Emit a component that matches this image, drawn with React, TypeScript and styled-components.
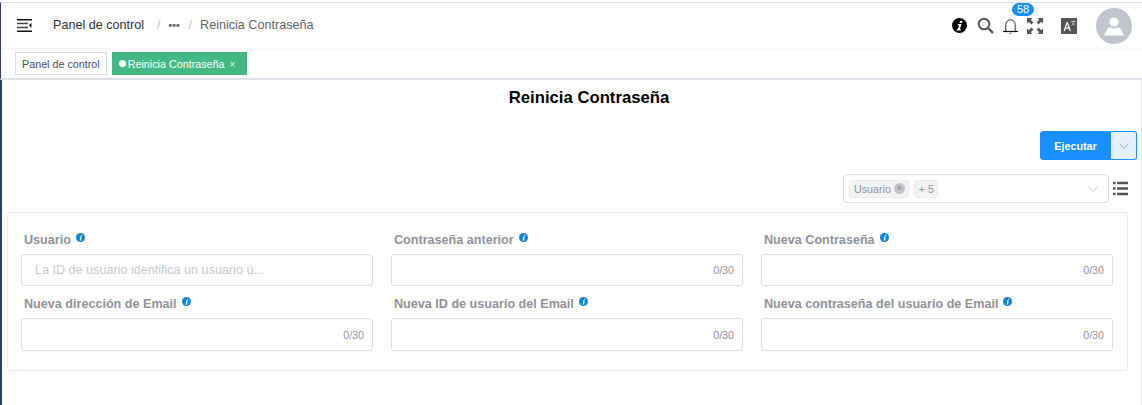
import React from "react";
import styled, { createGlobalStyle } from "styled-components";
import { ChevronDown } from "lucide-react";

const Global = createGlobalStyle`
  html, body { margin: 0; padding: 0; background: #fff; }
  body { font-family: "Liberation Sans", Arial, sans-serif; }
  * { box-sizing: border-box; }
`;

const Page = styled.div`
  width: 1142px;
  height: 405px;
  overflow: hidden;
  background: #fff;
  padding-top: 2px;
`;

const Header = styled.header`
  height: 46px;
  display: flex;
  align-items: center;
  padding: 0 10px 0 16px;
  border-top: 1px solid #dcdee3;
  border-left: 1px solid #2c3e66;
  box-shadow: 0 1px 3px rgba(0, 21, 41, 0.06);
`;

const Crumbs = styled.nav`
  display: flex;
  align-items: center;
  margin: -2px 0 0 21px;
  font-size: 12.6px;
  color: #303133;
`;

const Home = styled.span`
  margin-right: 4px;
`;

const Sep = styled.span`
  color: #c0c4cc;
  margin: 0 8px 0 9px;
`;

const Dots = styled.span`
  color: #606266;
  font-weight: bold;
  font-size: 10.5px;
`;

const Current = styled.span`
  color: #606266;
`;

const Tools = styled.div`
  margin-left: auto;
  display: flex;
  align-items: center;
`;

const BellWrap = styled.div`
  position: relative;
  width: 15px;
  height: 16px;
  margin-left: 9px;
`;

const Badge = styled.span`
  position: absolute;
  top: -15px;
  left: 9px;
  width: 22px;
  height: 13px;
  border-radius: 7px;
  background: #1890ff;
  color: #fff;
  font-size: 11px;
  line-height: 13px;
  text-align: center;
`;

const Avatar = styled.div`
  width: 36px;
  height: 36px;
  border-radius: 50%;
  background: #c0c4cc;
  margin-left: 19px;
  display: flex;
  align-items: center;
  justify-content: center;
`;

const TagsBar = styled.div`
  height: 32px;
  display: flex;
  align-items: flex-start;
  gap: 5px;
  padding: 4px 0 0 14px;
  border-left: 1px solid #2c3e66;
  border-bottom: 2px solid #dfe2ea;
`;

const Tag = styled.div<{ $active?: boolean }>`
  height: 23px;
  display: flex;
  align-items: center;
  padding: 0 ${(p) => (p.$active ? 11 : 6)}px 0 6px;
  font-size: 10.75px;
  color: ${(p) => (p.$active ? "#fff" : "#495060")};
  background: ${(p) => (p.$active ? "#42b983" : "#fff")};
  border: 1px solid ${(p) => (p.$active ? "#42b983" : "#d8dce5")};
`;

const TagDot = styled.span`
  width: 7px;
  height: 7px;
  border-radius: 50%;
  background: #fff;
  margin-right: 2px;
`;

const TagClose = styled.span`
  font-size: 10px;
  margin: 2px 0 0 5px;
  color: #e8f5ef;
`;

const Main = styled.main`
  height: 325px;
  padding: 0 4px 0 5px;
  border-left: 2px solid #2c3e66;
  border-right: 1px solid #e6e8ee;
`;

const Title = styled.h1`
  margin: 0;
  padding: 8px 0 0 34px;
  height: 51px;
  font-size: 16.7px;
  line-height: 20px;
  font-weight: bold;
  color: #000;
  text-align: center;
`;

const ActionRow = styled.div`
  display: flex;
  justify-content: flex-end;
`;

const RunButton = styled.button`
  width: 71px;
  height: 29px;
  border: 1px solid #1890ff;
  border-radius: 3px 0 0 3px;
  background: #1890ff;
  color: #fff;
  font: bold 10.8px "Liberation Sans", Arial, sans-serif;
`;

const RunArrow = styled.button`
  width: 26px;
  height: 29px;
  border: 1px solid #1890ff;
  border-left: none;
  border-radius: 0 3px 3px 0;
  background: #e6f0fd;
  color: #6f8fd8;
  display: flex;
  align-items: center;
  justify-content: center;
  padding: 0;
`;

const FilterRow = styled.div`
  display: flex;
  justify-content: flex-end;
  align-items: center;
  margin-top: 14px;
  gap: 4px;
  padding-right: 9px;
`;

const Select = styled.div`
  width: 266px;
  height: 29px;
  border: 1px solid #dcdfe6;
  border-radius: 3px;
  display: flex;
  align-items: center;
  gap: 5px;
  padding: 0 5px;
  color: #c0c4cc;
`;

const Chip = styled.span`
  height: 18px;
  display: flex;
  align-items: center;
  gap: 3px;
  padding: 0 3px 0 4px;
  background: #f4f4f5;
  border: 1px solid #ececee;
  border-radius: 3px;
  font-size: 10.7px;
  color: #909399;
`;

const ChipClose = styled.span`
  width: 11px;
  height: 11px;
  border-radius: 50%;
  background: #c0c4cc;
  color: #7d8087;
  font-size: 9px;
  line-height: 11px;
  text-align: center;
`;

const Spacer = styled.span`
  flex: 1;
`;

const Card = styled.section`
  margin-top: 9px;
  width: 1121px;
  height: 159px;
  border: 1px solid #e9ebf2;
  border-radius: 3px;
  padding: 9px 13px 0;
  display: grid;
  grid-template-columns: repeat(3, 352px);
  column-gap: 18px;
  align-content: start;
`;

const Field = styled.div``;

const Label = styled.label`
  display: flex;
  align-items: flex-start;
  height: 32px;
  padding: 11px 0 0 3px;
  font-size: 12.6px;
  line-height: 15px;
  font-weight: bold;
  color: #8f9299;
`;

const InputBox = styled.div<{ $tall?: boolean }>`
  height: ${(p) => (p.$tall ? 33 : 32)}px;
  border: 1px solid #dcdfe6;
  border-radius: 3px;
  display: flex;
  align-items: center;
  padding: 0 8px 0 13px;
  font-size: 12.6px;
  color: #c6c9cf;
`;

const Count = styled.span`
  margin-left: auto;
  font-size: 10.7px;
  color: #909399;
`;

const InfoDot = styled.svg`
  margin: 0 0 0 5px;
  flex: none;
`;

const SideIcon = styled.svg`
  flex: none;
`;

const ToolIcon = styled.svg<{ $gap?: number }>`
  flex: none;
  margin-left: ${(p) => p.$gap ?? 0}px;
`;

const InfoIcon = () => (
  <InfoDot width="9" height="9" viewBox="0 0 18 18">
    <circle cx="9" cy="9" r="9" fill="#0a84d6" />
    <path d="M10.5 3.5h2.2l-.5 2.2H10zM8 7.2h3.6L10 13.2h1.2l-.4 1.6H7l1.6-6H7.6z" fill="#fff" />
  </InfoDot>
);

const fields = [
  { label: "Usuario", placeholder: "La ID de usuario identifica un usuario ú..." },
  { label: "Contraseña anterior" },
  { label: "Nueva Contraseña" },
  { label: "Nueva dirección de Email", tall: true },
  { label: "Nueva ID de usuario del Email", tall: true },
  { label: "Nueva contraseña del usuario de Email", tall: true },
];

export default function App() {
  return (
    <Page>
      <Global />
      <Header>
        <SideIcon width="15" height="13" viewBox="0 0 15 13">
          <path d="M0 .8h15M0 12.2h15" stroke="#111" strokeWidth="1.5" />
          <path d="M0 4.6h11M0 8.4h11" stroke="#444" strokeWidth="1.5" />
          <path d="M14.5 3.8v5l-2.6-2.5z" fill="#111" />
        </SideIcon>
        <Crumbs>
          <Home>Panel de control</Home>
          <Sep>/</Sep>
          <Dots>•••</Dots>
          <Sep>/</Sep>
          <Current>Reinicia Contraseña</Current>
        </Crumbs>
        <Tools>
          <ToolIcon width="15" height="15" viewBox="0 0 30 30">
            <circle cx="15" cy="15" r="15" fill="#000" />
            <path d="M16 6h5l-1 4h-5zM12 12h7l-3 10h2l-1 3h-8l1-3h2l2-7h-3z" fill="#fff" />
          </ToolIcon>
          <ToolIcon $gap={10} width="17" height="17" viewBox="0 0 17 17">
            <circle cx="7" cy="7" r="5.3" fill="none" stroke="#555" strokeWidth="2" />
            <path d="M11 11l5 5" stroke="#555" strokeWidth="2.4" />
          </ToolIcon>
          <BellWrap>
            <svg width="15" height="16" viewBox="0 0 15 16">
              <path d="M2.8 13V6.5a4.7 4.7 0 0 1 9.4 0V13" fill="none" stroke="#333" strokeWidth="1" />
              <path d="M0 13.5h15" stroke="#111" strokeWidth="1.2" />
              <path d="M6.5 15.4h2" stroke="#b36a10" strokeWidth="1.2" />
            </svg>
            <Badge>58</Badge>
          </BellWrap>
          <ToolIcon $gap={9} width="16" height="16" viewBox="0 0 16 16">
            <path d="M0 0h5.5L3.8 1.8l2.6 2.6-2 2-2.6-2.6L0 5.5zM16 0v5.5l-1.8-1.7-2.6 2.6-2-2 2.6-2.6L10.5 0zM0 16v-5.5l1.8 1.7 2.6-2.6 2 2-2.6 2.6L5.5 16zM16 16h-5.5l1.7-1.8-2.6-2.6 2-2 2.6 2.6 1.8-1.7z" fill="#555" />
          </ToolIcon>
          <ToolIcon $gap={18} width="16" height="16" viewBox="0 0 16 16">
            <rect width="16" height="16" fill="#555" />
            <path d="M2.5 13L5.6 4h1.3L10 13H8.6l-.7-2.2H4.6L3.9 13zM5 9.6h2.5L6.2 5.8z" fill="#fff" />
            <path d="M10 3.5h4.5M12.2 2.5v1M13.5 3.5c-.5 2-1.6 3.2-3 4M11 4.6c.6 1.3 1.6 2.2 3 2.8" stroke="#ddd" strokeWidth=".7" fill="none" />
          </ToolIcon>
          <Avatar>
            <svg width="20" height="20" viewBox="0 0 20 20">
              <circle cx="10" cy="6" r="4.6" fill="#fff" />
              <path d="M0 19.5 3.6 12.6c.5-.8 1.3-1.2 2.2-1.2h1.4c1.6 1.6 4 1.6 5.6 0h1.4c.9 0 1.7.4 2.2 1.2L20 19.5z" fill="#fff" />
            </svg>
          </Avatar>
        </Tools>
      </Header>
      <TagsBar>
        <Tag>Panel de control</Tag>
        <Tag $active>
          <TagDot />
          Reinicia Contraseña
          <TagClose>×</TagClose>
        </Tag>
      </TagsBar>
      <Main>
        <Title>Reinicia Contraseña</Title>
        <ActionRow>
          <RunButton>Ejecutar</RunButton>
          <RunArrow>
            <ChevronDown size={18} strokeWidth={1} />
          </RunArrow>
        </ActionRow>
        <FilterRow>
          <Select>
            <Chip>
              Usuario <ChipClose>×</ChipClose>
            </Chip>
            <Chip>+ 5</Chip>
            <Spacer />
            <ChevronDown size={20} strokeWidth={1} />
          </Select>
          <SideIcon width="15" height="15" viewBox="0 0 15 15">
            <path d="M0 2h2.5M4 2h11M0 7.5h2.5M4 7.5h11M0 13h2.5M4 13h11" stroke="#555" strokeWidth="2.4" />
          </SideIcon>
        </FilterRow>
        <Card>
          {fields.map((f) => (
            <Field key={f.label}>
              <Label>
                {f.label}
                <InfoIcon />
              </Label>
              <InputBox $tall={f.tall}>
                {f.placeholder ?? <Count>0/30</Count>}
              </InputBox>
            </Field>
          ))}
        </Card>
      </Main>
    </Page>
  );
}
